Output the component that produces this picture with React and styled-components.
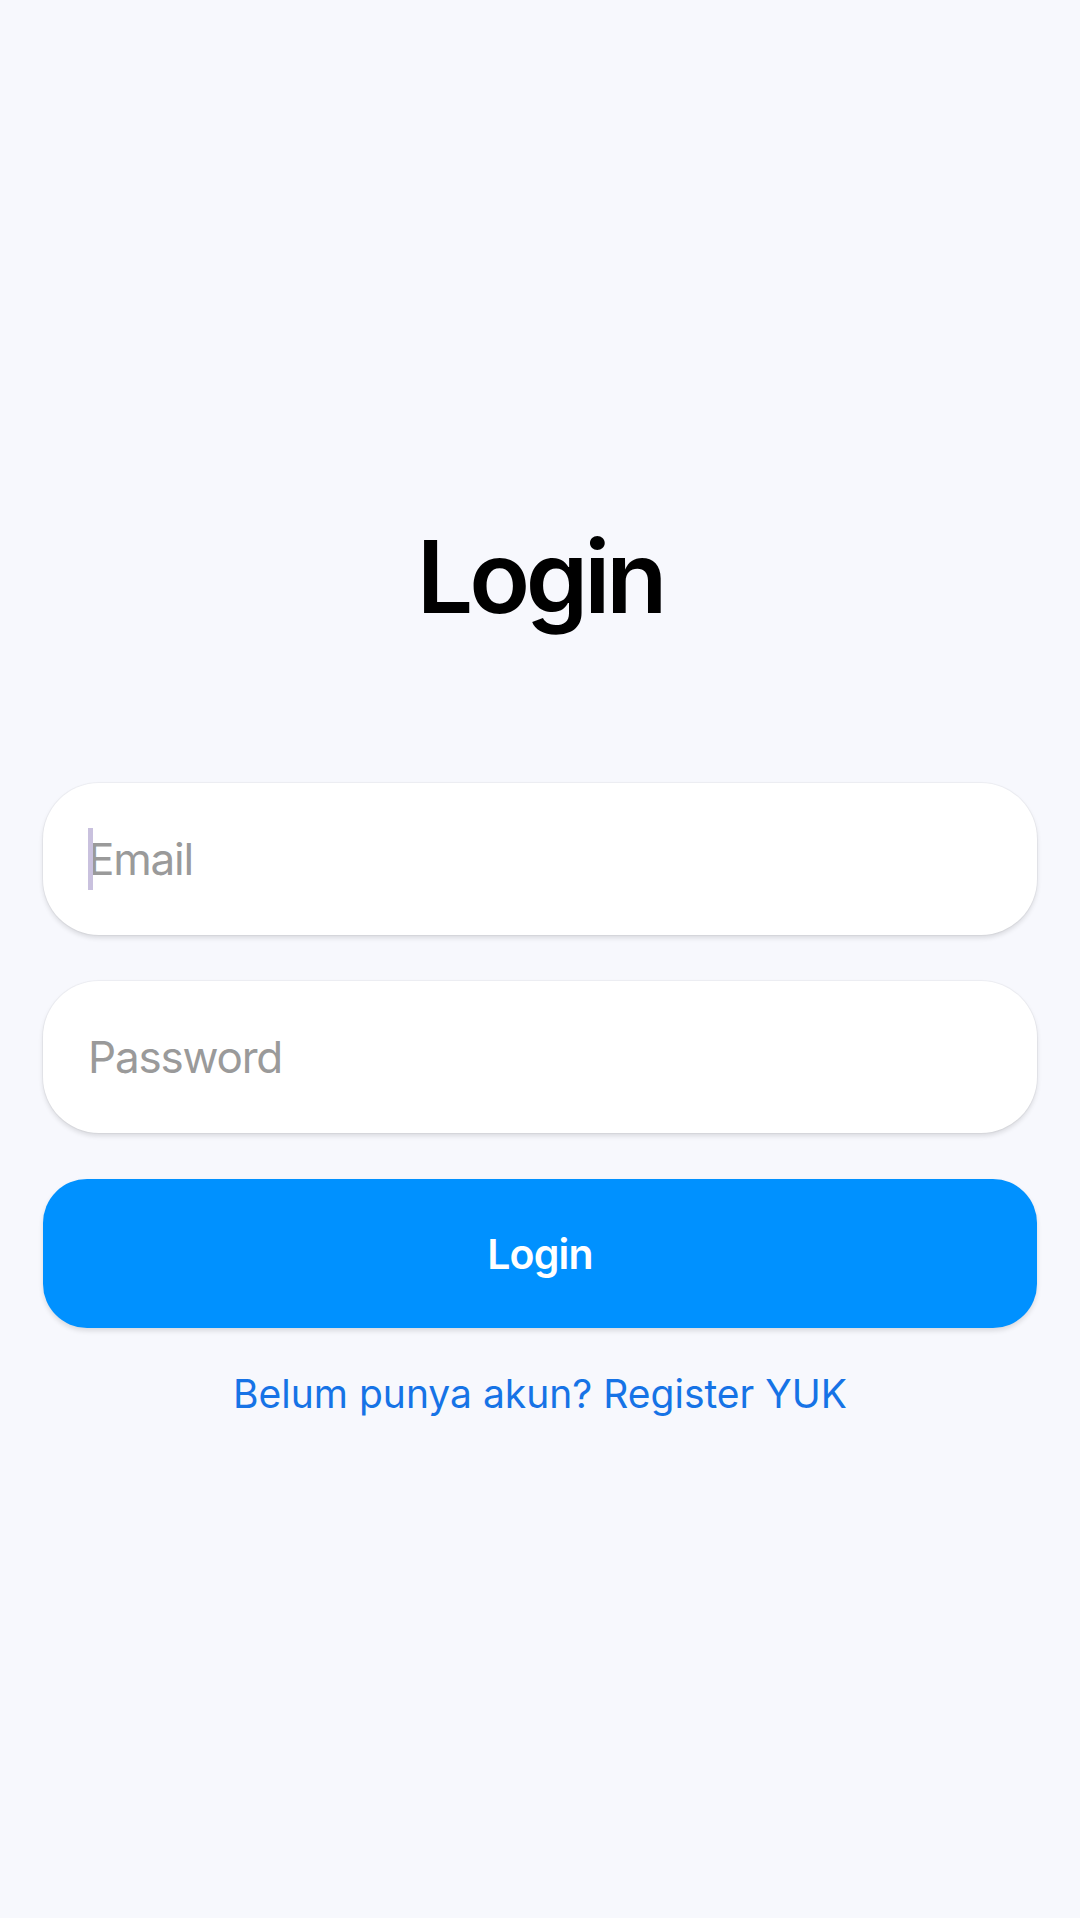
import React from 'react';
import styled, { createGlobalStyle } from 'styled-components';

const GlobalStyle = createGlobalStyle`
  html, body {
    margin: 0;
    padding: 0;
    background: #f7f8fd;
  }
  body {
    font-family: Inter, 'Liberation Sans', sans-serif;
  }
`;

export default function App() {
  return (
    <>
      <GlobalStyle />
      <Page>
        <Title>Login</Title>
        <Form onSubmit={e => e.preventDefault()}>
          <Field>
            <Caret />
            <Input type="email" placeholder="Email" />
          </Field>
          <Field>
            <Input type="password" placeholder="Password" />
          </Field>
          <Button type="submit">Login</Button>
        </Form>
        <RegisterLink href="#">Belum punya akun? Register YUK</RegisterLink>
      </Page>
    </>
  );
}

const Page = styled.div`
  min-height: 1918px;
  box-sizing: border-box;
  padding: 522px 43px 0;
  display: flex;
  flex-direction: column;
  align-items: center;
`;

const Title = styled.h1`
  margin: 0;
  font-size: 100px;
  line-height: 110px;
  font-weight: 600;
  letter-spacing: -4.2px;
  color: #000;
`;

const Form = styled.form`
  width: 100%;
  margin-top: 151px;
  display: flex;
  flex-direction: column;
  gap: 46px;
`;

const Field = styled.div`
  position: relative;
  height: 152px;
  background: #fff;
  border-radius: 56px;
  box-shadow: 0 0 0 1px rgba(0, 0, 0, 0.035), 0 3px 5px rgba(0, 0, 0, 0.12);
  display: flex;
  align-items: center;
`;

const Caret = styled.span`
  position: absolute;
  left: 45px;
  top: 45px;
  width: 5px;
  height: 62px;
  background: #c9c1de;
`;

const Input = styled.input`
  width: 100%;
  height: 100%;
  box-sizing: border-box;
  padding: 0 44px 0 45px;
  border: none;
  background: transparent;
  outline: none;
  font-family: Inter, 'Liberation Sans', sans-serif;
  font-size: 44px;
  letter-spacing: -1.2px;
  color: #222;

  &::placeholder {
    color: #9a9a9a;
  }
`;

const Button = styled.button`
  height: 149px;
  border: none;
  border-radius: 44px;
  background: #0091ff;
  color: #fff;
  font-family: Inter, 'Liberation Sans', sans-serif;
  font-size: 41px;
  font-weight: 600;
  letter-spacing: -0.8px;
  box-shadow: 0 3px 5px rgba(0, 0, 0, 0.12);
  cursor: pointer;
`;

const RegisterLink = styled.a`
  margin-top: 42px;
  font-size: 39px;
  color: #1673e6;
  text-decoration: none;
`;
